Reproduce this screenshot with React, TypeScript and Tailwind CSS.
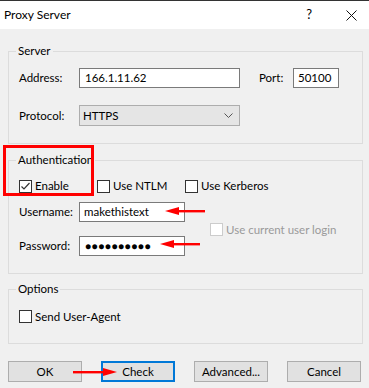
import React from "react";

const font = { fontFamily: 'Lato, "Noto Sans", sans-serif' };

function CheckBox({ checked = false, disabled = false }: { checked?: boolean; disabled?: boolean }) {
  return (
    <span
      className={
        "flex h-[13px] w-[13px] shrink-0 items-center justify-center border bg-white " +
        (disabled ? "border-[#cccccc]" : "border-[#333333]")
      }
    >
      {checked && (
        <svg width="11" height="11" viewBox="0 0 11 11">
          <path d="M1.5 5.5 L4 8 L9.5 2" fill="none" stroke="#333" strokeWidth="1.2" />
        </svg>
      )}
    </span>
  );
}

function Group({ title, className, children }: { title: string; className?: string; children: React.ReactNode }) {
  return (
    <fieldset className={"ml-[8px] w-[355px] border border-[#dcdcdc] px-[10px] " + (className ?? "")}>
      <legend className="ml-[-3px] px-[2px] text-[11.5px] leading-[16px] text-black">{title}</legend>
      {children}
    </fieldset>
  );
}

function Btn({ label, active = false }: { label: string; active?: boolean }) {
  return (
    <button
      className={
        "flex h-[21px] w-[74px] items-center justify-center bg-[#e1e1e1] text-[11.5px] text-black " +
        (active ? "border-2 border-[#0078d7]" : "border border-[#adadad]")
      }
    >
      {label}
    </button>
  );
}

function Arrow({ x1, x2, y, dir }: { x1: number; x2: number; y: number; dir: "left" | "right" }) {
  const w = x2 - x1;
  const head = 14;
  return (
    <svg className="absolute" style={{ left: x1, top: y - 5 }} width={w} height="10" viewBox={`0 0 ${w} 10`}>
      {dir === "left" ? (
        <>
          <polygon points={`0,5 ${head},1 ${head},9`} fill="#ff0000" />
          <rect x={head - 1} y="4" width={w - head + 1} height="2.4" fill="#ff0000" />
        </>
      ) : (
        <>
          <polygon points={`${w},5 ${w - head},1 ${w - head},9`} fill="#ff0000" />
          <rect x="0" y="4" width={w - head + 1} height="2.4" fill="#ff0000" />
        </>
      )}
    </svg>
  );
}

export default function App() {
  return (
    <div className="relative h-[388px] w-[369px] overflow-hidden border-t border-[#333] bg-[#f0f0f0] text-[11.5px] text-black" style={font}>
      {/* title bar */}
      <div className="flex h-[28px] items-center bg-white pl-[4px]">
        <span className="text-[12px]">Proxy Server</span>
        <span className="ml-auto mr-[34px] text-[13px]">?</span>
        <svg className="mr-[12px]" width="11" height="11" viewBox="0 0 11 11">
          <path d="M0.5 0.5 L10.5 10.5 M10.5 0.5 L0.5 10.5" stroke="#111" strokeWidth="1" />
        </svg>
      </div>

      <Group title="Server" className="mt-[14px] pb-[17px] pt-[9px]">
        <div className="flex h-[20px] items-center">
          <span className="w-[60px]">Address:</span>
          <div className="flex h-[20px] w-[161px] items-center border border-[#7a7a7a] bg-white px-[5px]">166.1.11.62</div>
          <span className="ml-[19px] w-[34px]">Port:</span>
          <div className="flex h-[20px] w-[46px] items-center border border-[#7a7a7a] bg-white px-[4px]">50100</div>
        </div>
        <div className="mt-[17px] flex h-[21px] items-center">
          <span className="w-[60px]">Protocol:</span>
          <div className="flex h-[21px] w-[161px] items-center border border-[#adadad] bg-[#e5e5e5] pl-[3px] pr-[6px]">
            <span>HTTPS</span>
            <svg className="ml-auto" width="9" height="6" viewBox="0 0 9 6">
              <path d="M0.5 0.5 L4.5 4.5 L8.5 0.5" fill="none" stroke="#555" strokeWidth="1" />
            </svg>
          </div>
        </div>
      </Group>

      <Group title="Authentication" className="mt-[8px] pb-[17px] pt-[11px]">
        <div className="flex h-[14px] items-center">
          <label className="flex w-[78px] items-center gap-[3px]">
            <CheckBox checked />
            <span>Enable</span>
          </label>
          <label className="flex w-[88px] items-center gap-[3px]">
            <CheckBox />
            <span>Use NTLM</span>
          </label>
          <label className="flex items-center gap-[3px]">
            <CheckBox />
            <span>Use Kerberos</span>
          </label>
        </div>
        <div className="mt-[9px] flex">
          <div className="flex flex-col gap-[14px]">
            <div className="flex h-[20px] items-center">
              <span className="w-[60px]">Username:</span>
              <div className="flex h-[20px] w-[106px] items-center border border-[#7a7a7a] bg-white px-[4px]">makethistext</div>
            </div>
            <div className="flex h-[20px] items-center">
              <span className="w-[60px]">Password:</span>
              <div className="flex h-[20px] w-[106px] items-center border border-[#7a7a7a] bg-white px-[5px] text-[10px] tracking-[0.6px]">
                ●●●●●●●●●●
              </div>
            </div>
          </div>
          <label className="ml-[25px] mt-[21px] flex h-[13px] items-center gap-[3px] text-[#9a9a9a]">
            <CheckBox disabled />
            <span>Use current user login</span>
          </label>
        </div>
      </Group>

      <Group title="Options" className="mt-[7px] pb-[20px] pt-[13px]">
        <label className="flex h-[13px] items-center gap-[3px]">
          <CheckBox />
          <span>Send User-Agent</span>
        </label>
      </Group>

      <div className="mt-[17px] flex justify-between px-[8px]">
        <Btn label="OK" />
        <Btn label="Check" active />
        <Btn label="Advanced..." />
        <Btn label="Cancel" />
      </div>

      {/* annotations */}
      <div className="absolute left-[3px] top-[144px] h-[51px] w-[91px] border-[3px] border-[#ff0000]" />
      <Arrow x1={165} x2={205} y={210} dir="left" />
      <Arrow x1={160} x2={200} y={243} dir="left" />
      <Arrow x1={73} x2={117} y={371} dir="right" />
    </div>
  );
}
